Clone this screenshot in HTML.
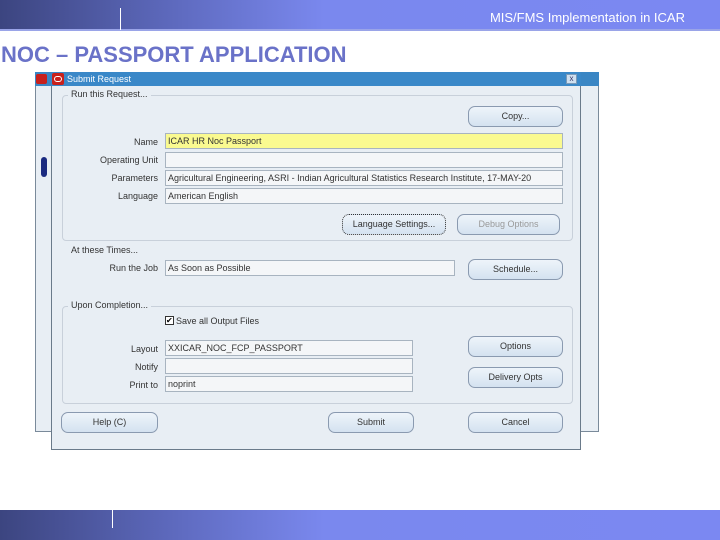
<!DOCTYPE html>
<html><head><style>
*{margin:0;padding:0;box-sizing:border-box}
body{width:720px;height:540px;background:#fff;position:relative;overflow:hidden;font-family:"Liberation Sans",sans-serif}
.bar{position:absolute;left:0;width:720px;height:30px;background:linear-gradient(90deg,#3c4580 0%,#5f6bc0 25%,#7a88ee 45%,#7b88f2 100%)}
.ab{position:absolute}
.lbl{position:absolute;font-size:9px;color:#333;text-align:right;width:120px}
.fld{position:absolute;height:16px;border:1px solid #a8b4c0;background:#f4f6f8;font-size:9px;color:#333;padding:2px 2px;white-space:nowrap;overflow:hidden}
.btn{position:absolute;height:21px;border:1px solid #8a9ab0;border-radius:7px;background:linear-gradient(#eef4fa,#d4e2f0);font-size:9px;color:#333;text-align:center;line-height:19px}
.grp{position:absolute;border:1px solid #c8d0da;border-radius:4px}
.gt{position:absolute;font-size:9px;color:#333;background:#e8eef4;padding:0 3px}
</style></head><body>
<div class="bar" style="top:0"></div>
<div class="ab" style="left:0;top:29px;width:720px;height:2px;background:#9aa4e8"></div>
<div class="ab" style="left:120px;top:8px;width:1px;height:22px;background:#fff"></div>
<div class="ab" style="right:35px;top:10px;font-size:13px;color:#fff">MIS/FMS Implementation in ICAR</div>
<div class="ab" style="left:1px;top:42px;font-size:22px;font-weight:bold;color:#6a72c8">NOC – PASSPORT APPLICATION</div>
<div class="bar" style="top:510px"></div>
<div class="ab" style="left:112px;top:510px;width:1px;height:18px;background:#fff"></div>

<!-- back window -->
<div class="ab" style="left:35px;top:72px;width:564px;height:360px;background:#e8eef4;border:1px solid #7a8a9a"></div>
<div class="ab" style="left:35px;top:72px;width:564px;height:14px;background:#3a86c4"></div>
<div class="ab" style="left:36px;top:74px;width:11px;height:10px;background:#c8201c;border-radius:2px"></div>
<div class="ab" style="left:41px;top:157px;width:6px;height:20px;background:#1a2a80;border-radius:3px"></div>

<!-- dialog -->
<div class="ab" style="left:51px;top:72px;width:530px;height:378px;background:#e8eef4;border:1px solid #6a7a8a"></div>
<div class="ab" style="left:51px;top:72px;width:530px;height:14px;background:#3a88c8"></div>
<div class="ab" style="left:52px;top:73px;width:12px;height:12px;background:#c8201c;border-radius:2px"><div style="margin:3px 2px;width:8px;height:6px;border:1.5px solid #fff;border-radius:3px"></div></div>
<div class="ab" style="left:67px;top:74px;font-size:9px;color:#fff">Submit Request</div>
<div class="ab" style="left:566px;top:74px;width:11px;height:10px;background:#cfe0f0;border:1px solid #7a9ab8;font-size:8px;line-height:8px;text-align:center;color:#336">x</div>

<div class="grp" style="left:62px;top:95px;width:511px;height:146px"></div>
<div class="gt" style="left:68px;top:89px">Run this Request...</div>
<div class="btn" style="left:468px;top:106px;width:95px">Copy...</div>
<div class="lbl" style="left:38px;top:137px">Name</div>
<div class="fld" style="left:165px;top:133px;width:398px;background:#fafa90">ICAR HR Noc Passport</div>
<div class="lbl" style="left:38px;top:155px">Operating Unit</div>
<div class="fld" style="left:165px;top:152px;width:398px"></div>
<div class="lbl" style="left:38px;top:173px">Parameters</div>
<div class="fld" style="left:165px;top:170px;width:398px">Agricultural Engineering, ASRI - Indian Agricultural Statistics Research Institute, 17-MAY-20</div>
<div class="lbl" style="left:38px;top:191px">Language</div>
<div class="fld" style="left:165px;top:188px;width:398px">American English</div>
<div class="btn" style="left:342px;top:214px;width:104px;border:1px dotted #333">Language Settings...</div>
<div class="btn" style="left:457px;top:214px;width:103px;color:#999">Debug Options</div>

<div class="gt" style="left:68px;top:245px">At these Times...</div>
<div class="lbl" style="left:38px;top:263px">Run the Job</div>
<div class="fld" style="left:165px;top:260px;width:290px">As Soon as Possible</div>
<div class="btn" style="left:468px;top:259px;width:95px">Schedule...</div>

<div class="grp" style="left:62px;top:306px;width:511px;height:98px"></div>
<div class="gt" style="left:68px;top:300px">Upon Completion...</div>
<div class="ab" style="left:165px;top:316px;width:9px;height:9px;border:1px solid #333;background:#fff;font-size:8px;line-height:7px">✔</div>
<div class="ab" style="left:176px;top:316px;font-size:9px;color:#333">Save all Output Files</div>
<div class="lbl" style="left:38px;top:344px">Layout</div>
<div class="fld" style="left:165px;top:340px;width:248px">XXICAR_NOC_FCP_PASSPORT</div>
<div class="lbl" style="left:38px;top:362px">Notify</div>
<div class="fld" style="left:165px;top:358px;width:248px"></div>
<div class="lbl" style="left:38px;top:380px">Print to</div>
<div class="fld" style="left:165px;top:376px;width:248px">noprint</div>
<div class="btn" style="left:468px;top:336px;width:95px">Options</div>
<div class="btn" style="left:468px;top:367px;width:95px">Delivery Opts</div>

<div class="btn" style="left:61px;top:412px;width:97px">Help (C)</div>
<div class="btn" style="left:328px;top:412px;width:86px">Submit</div>
<div class="btn" style="left:468px;top:412px;width:95px">Cancel</div>
</body></html>
